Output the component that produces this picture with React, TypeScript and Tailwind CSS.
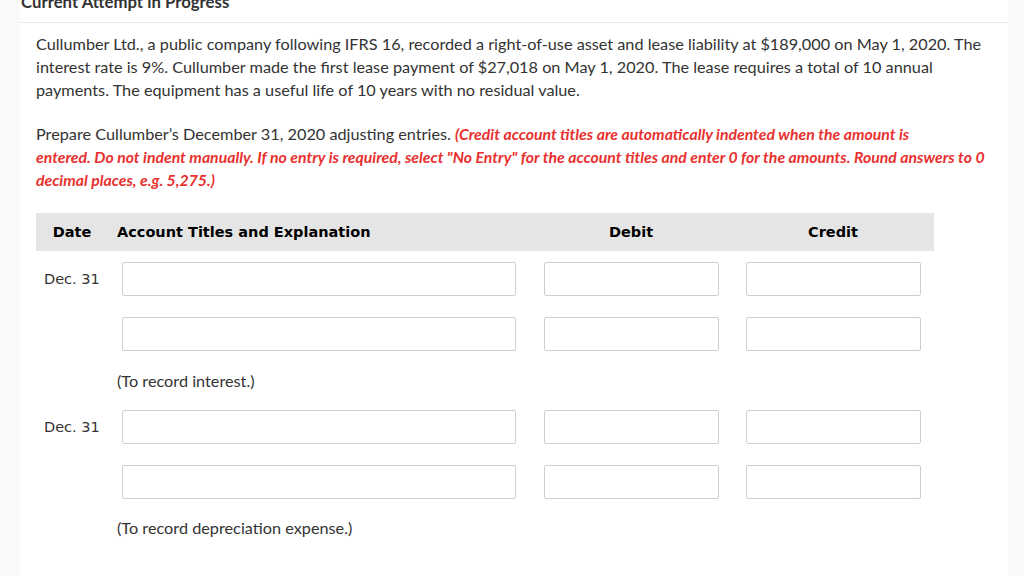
import React from 'react';

const bodyFont = { fontFamily: 'Lato, "Open Sans", sans-serif' };
const tableFont = { fontFamily: '"DejaVu Sans", Verdana, sans-serif' };

const Field = ({ className }: { className: string }) => (
	<input type="text" className={`h-[34px] rounded-[2px] border border-[#cfcfcf] bg-white ${className}`} />
);

const EntryRow = ({ date }: { date?: string }) => (
	<div className="flex items-center h-[34px]">
		<div className="w-[72px] pl-[8px] text-[14.5px] text-[#333]" style={tableFont}>
			{date}
		</div>
		<div className="w-[422px] pl-[14px]">
			<Field className="w-[394px]" />
		</div>
		<div className="w-[202px] flex justify-center">
			<Field className="w-[175px]" />
		</div>
		<div className="w-[202px] flex justify-center">
			<Field className="w-[175px]" />
		</div>
	</div>
);

const Note = ({ text, className }: { text: string; className: string }) => (
	<div className={`pl-[81px] text-[16.25px] leading-[23px] text-[#333] ${className}`} style={bodyFont}>
		{text}
	</div>
);

export default function App() {
	return (
		<div className="flex h-[576px] overflow-hidden bg-[#f9f9f9]">
			<div className="w-[20px] shrink-0" />
			<div className="w-[988px] shrink-0 bg-white" style={bodyFont}>
				<div className="border-b border-[#ececec] pb-[10px]">
					<div className="-mt-[8px] pl-[1px] text-[16.75px] leading-[20px] font-bold text-[#333]">
						Current Attempt in Progress
					</div>
				</div>
				<div className="px-[16px] pt-[9px] text-[16.25px] leading-[23px] text-[#333]">
					<p className="pr-[8px]">
						Cullumber Ltd., a public company following IFRS 16, recorded a right-of-use asset and lease liability at $189,000 on May 1, 2020. The interest rate is 9%. Cullumber made the first lease payment of $27,018 on May 1, 2020. The lease requires a total of 10 annual payments. The equipment has a useful life of 10 years with no residual value.
					</p>
					<p className="mt-[21px] pr-[2px]">
						Prepare Cullumber’s December 31, 2020 adjusting entries.{' '}
						<span className="font-bold italic text-[15.8px] text-[#e8312f]">
							(Credit account titles are automatically indented when the amount is
							<br />
							entered. Do not indent manually. If no entry is required, select "No Entry" for the account titles and enter 0 for the amounts. Round answers to 0 decimal places, e.g. 5,275.)
						</span>
					</p>
					<div className="mt-[22px] w-[898px]">
						<div className="flex items-center h-[38px] bg-[#e5e5e5] text-[14.5px] font-bold text-black" style={tableFont}>
							<div className="w-[72px] text-center">Date</div>
							<div className="w-[422px] pl-[9px]">Account Titles and Explanation</div>
							<div className="w-[202px] text-center">Debit</div>
							<div className="w-[202px] text-center">Credit</div>
						</div>
						<div className="mt-[11px]">
							<EntryRow date="Dec. 31" />
						</div>
						<div className="mt-[21px]">
							<EntryRow />
						</div>
						<Note text="(To record interest.)" className="mt-[18px]" />
						<div className="mt-[18px]">
							<EntryRow date="Dec. 31" />
						</div>
						<div className="mt-[21px]">
							<EntryRow />
						</div>
						<Note text="(To record depreciation expense.)" className="mt-[17px]" />
					</div>
				</div>
			</div>
			<div className="flex-1" />
		</div>
	);
}
